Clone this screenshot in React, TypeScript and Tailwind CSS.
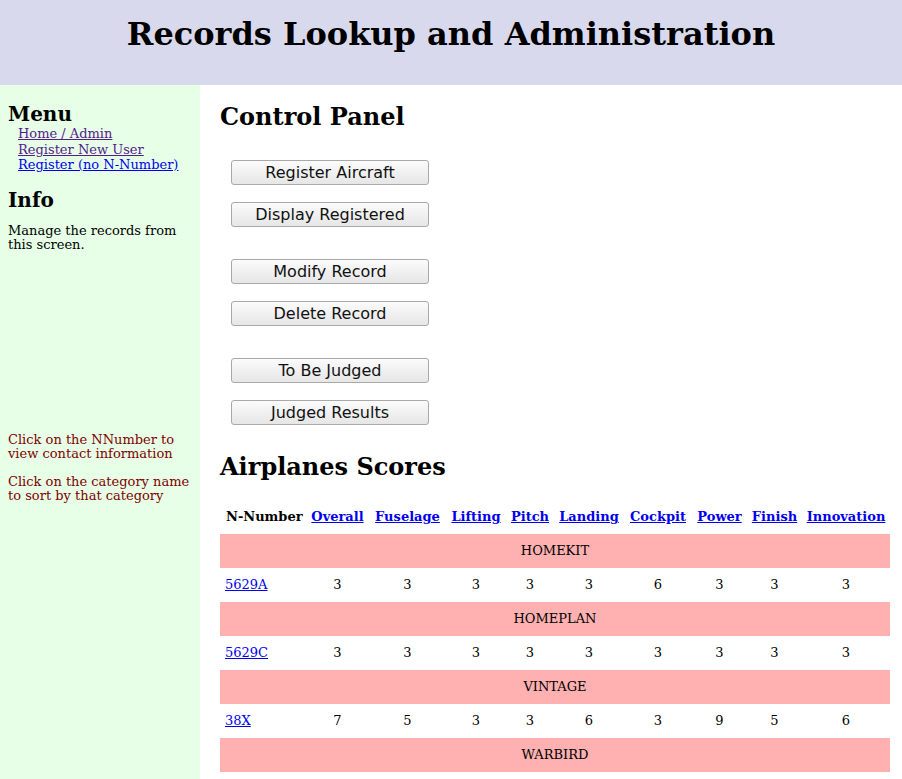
const serif = { fontFamily: '"DejaVu Serif", serif' };

const buttonGroups = [
  ['Register Aircraft', 'Display Registered'],
  ['Modify Record', 'Delete Record'],
  ['To Be Judged', 'Judged Results'],
];

const columns = [
  { name: 'N-Number', width: 'w-[86px]', link: false },
  { name: 'Overall', width: 'w-[63px]', link: true },
  { name: 'Fuselage', width: 'w-[77px]', link: true },
  { name: 'Lifting', width: 'w-[60px]', link: true },
  { name: 'Pitch', width: 'w-[48px]', link: true },
  { name: 'Landing', width: 'w-[70px]', link: true },
  { name: 'Cockpit', width: 'w-[68px]', link: true },
  { name: 'Power', width: 'w-[55px]', link: true },
  { name: 'Finish', width: 'w-[55px]', link: true },
  { name: 'Innovation', width: 'w-[88px]', link: true },
];

const groups = [
  { category: 'HOMEKIT', rows: [{ id: '5629A', scores: [3, 3, 3, 3, 3, 6, 3, 3, 3] }] },
  { category: 'HOMEPLAN', rows: [{ id: '5629C', scores: [3, 3, 3, 3, 3, 3, 3, 3, 3] }] },
  { category: 'VINTAGE', rows: [{ id: '38X', scores: [7, 5, 3, 3, 6, 3, 9, 5, 6] }] },
  { category: 'WARBIRD', rows: [] },
];

function PanelButton({ label }: { label: string }) {
  return (
    <button
      className="h-[25px] w-[198px] rounded-[3px] border border-[#a9a9a9] bg-gradient-to-b from-[#fbfbfb] to-[#e6e6e6] text-[16px] leading-none text-[#111]"
      style={{ fontFamily: '"DejaVu Sans", sans-serif' }}
    >
      {label}
    </button>
  );
}

export default function App() {
  return (
    <div className="min-h-[779px] bg-white text-black" style={serif}>
      <header className="h-[85px] bg-[#d9d9ed] pt-[14px] text-center">
        <h1 className="text-[32px] font-bold leading-[40px]">Records Lookup and Administration</h1>
      </header>

      <div className="flex">
        <aside className="min-h-[694px] w-[200px] shrink-0 bg-[#e6ffe6] px-2 pt-[17px] text-[13px]">
          <h3 className="text-[20px] font-bold leading-[24px]">Menu</h3>
          <ul className="ml-[10px] leading-[15.5px]">
            <li>
              <a href="#" className="text-[#551a8b] underline">Home / Admin</a>
            </li>
            <li>
              <a href="#" className="text-[#551a8b] underline">Register New User</a>
            </li>
            <li>
              <a href="#" className="text-[#0000ee] underline">Register (no N-Number)</a>
            </li>
          </ul>
          <h3 className="mt-[15px] text-[20px] font-bold leading-[24px]">Info</h3>
          <p className="mt-[12px] leading-[14px]">Manage the records from this screen.</p>

          <div className="mt-[181px] leading-[14px] text-[#800000]">
            <p>Click on the NNumber to view contact information</p>
            <p className="mt-[14px]">Click on the category name to sort by that category</p>
          </div>
        </aside>

        <main className="flex-1 px-5 pt-[17px]">
          <h2 className="text-[24px] font-bold leading-[30px]">Control Panel</h2>

          <div className="mt-[28px] flex flex-col gap-[32px] pl-[11px]">
            {buttonGroups.map((group, i) => (
              <div key={i} className="flex flex-col gap-[17px]">
                {group.map(label => (
                  <PanelButton key={label} label={label} />
                ))}
              </div>
            ))}
          </div>

          <h2 className="mt-[27px] text-[24px] font-bold leading-[30px]">Airplanes Scores</h2>

          <table className="mt-[18px] w-[670px] table-fixed border-collapse text-[13px]">
            <thead>
              <tr className="h-[34px]">
                {columns.map(col => (
                  <th
                    key={col.name}
                    className={`${col.width} whitespace-nowrap px-0 font-bold ${col.link ? 'text-center' : 'pl-[6px] text-left'}`}
                  >
                    {col.link ? (
                      <a href="#" className="text-[#0000ee] underline">{col.name}</a>
                    ) : (
                      col.name
                    )}
                  </th>
                ))}
              </tr>
            </thead>
            <tbody>
              {groups.map(g => (
                <>
                  <tr key={g.category} className="h-[34px] bg-[#ffb0b0]">
                    <td colSpan={10} className="text-center">{g.category}</td>
                  </tr>
                  {g.rows.map(r => (
                    <tr key={r.id} className="h-[34px]">
                      <td className="px-[5px]">
                        <a href="#" className="text-[#0000ee] underline">{r.id}</a>
                      </td>
                      {r.scores.map((s, i) => (
                        <td key={i} className="text-center">{s}</td>
                      ))}
                    </tr>
                  ))}
                </>
              ))}
            </tbody>
          </table>
        </main>
      </div>
    </div>
  );
}
